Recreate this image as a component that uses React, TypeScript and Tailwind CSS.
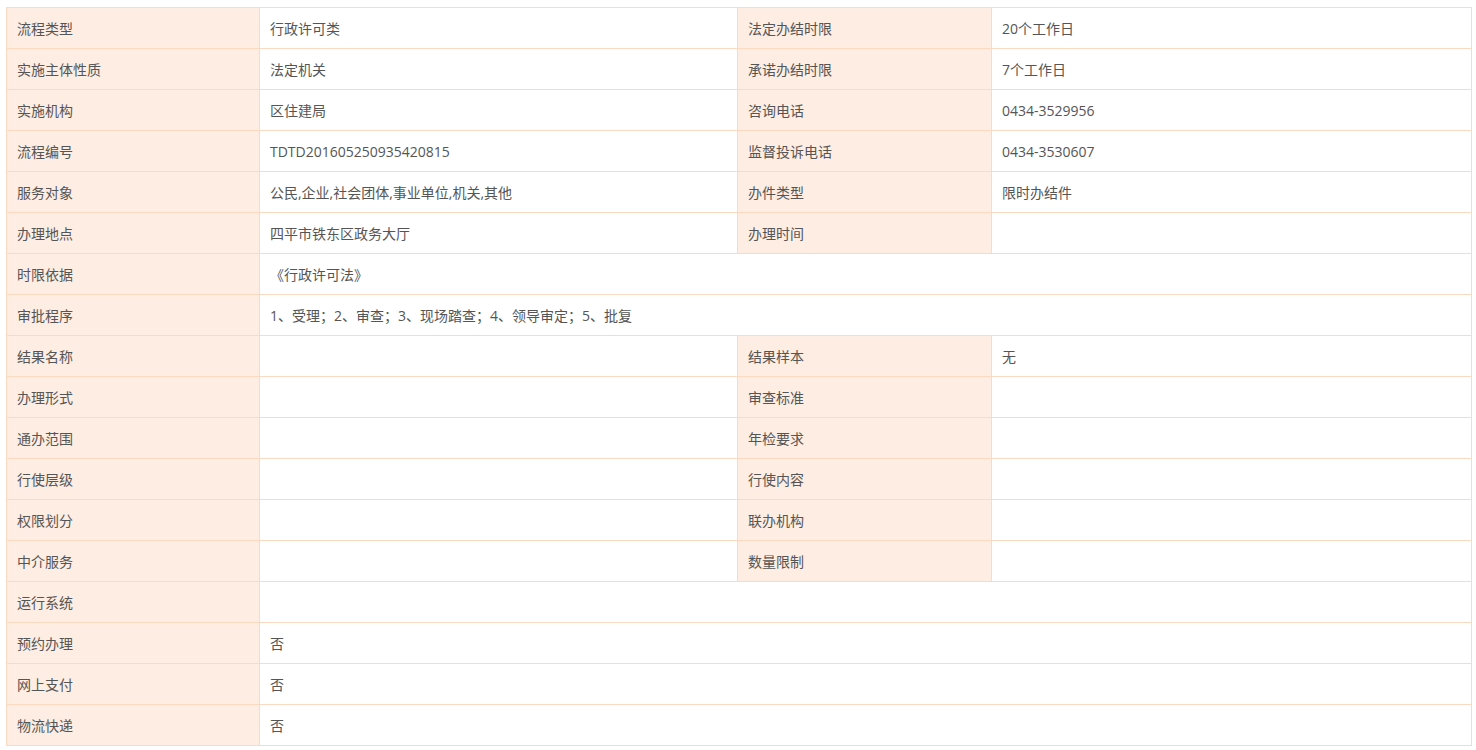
import React from "react";

type Row =
  | { kind: "pair"; l1: string; v1: string; l2: string; v2: string }
  | { kind: "wide"; l1: string; v1: string };

const rows: Row[] = [
  { kind: "pair", l1: "流程类型", v1: "行政许可类", l2: "法定办结时限", v2: "20个工作日" },
  { kind: "pair", l1: "实施主体性质", v1: "法定机关", l2: "承诺办结时限", v2: "7个工作日" },
  { kind: "pair", l1: "实施机构", v1: "区住建局", l2: "咨询电话", v2: "0434-3529956" },
  { kind: "pair", l1: "流程编号", v1: "TDTD201605250935420815", l2: "监督投诉电话", v2: "0434-3530607" },
  { kind: "pair", l1: "服务对象", v1: "公民,企业,社会团体,事业单位,机关,其他", l2: "办件类型", v2: "限时办结件" },
  { kind: "pair", l1: "办理地点", v1: "四平市铁东区政务大厅", l2: "办理时间", v2: "" },
  { kind: "wide", l1: "时限依据", v1: "《行政许可法》" },
  { kind: "wide", l1: "审批程序", v1: "1、受理；2、审查；3、现场踏查；4、领导审定；5、批复" },
  { kind: "pair", l1: "结果名称", v1: "", l2: "结果样本", v2: "无" },
  { kind: "pair", l1: "办理形式", v1: "", l2: "审查标准", v2: "" },
  { kind: "pair", l1: "通办范围", v1: "", l2: "年检要求", v2: "" },
  { kind: "pair", l1: "行使层级", v1: "", l2: "行使内容", v2: "" },
  { kind: "pair", l1: "权限划分", v1: "", l2: "联办机构", v2: "" },
  { kind: "pair", l1: "中介服务", v1: "", l2: "数量限制", v2: "" },
  { kind: "wide", l1: "运行系统", v1: "" },
  { kind: "wide", l1: "预约办理", v1: "否" },
  { kind: "wide", l1: "网上支付", v1: "否" },
  { kind: "wide", l1: "物流快递", v1: "否" },
];

const cell = "h-[41px] border border-[#fcd9c1] px-[10px] align-middle whitespace-nowrap";
const label = `${cell} bg-[#fdede3]`;
const value = `${cell} bg-white`;

export default function App() {
  return (
    <div className="min-h-[750px] bg-white pl-[6px] pt-[7px] text-[14px] text-[#555] [font-family:'Open_Sans','Noto_Sans_CJK_SC',sans-serif]">
      <table className="w-[1466px] table-fixed border-collapse">
        <colgroup>
          <col className="w-[253px]" />
          <col className="w-[478px]" />
          <col className="w-[254px]" />
          <col />
        </colgroup>
        <tbody>
          {rows.map((r) =>
            r.kind === "pair" ? (
              <tr key={r.l1}>
                <td className={label}>{r.l1}</td>
                <td className={value}>{r.v1}</td>
                <td className={label}>{r.l2}</td>
                <td className={value}>{r.v2}</td>
              </tr>
            ) : (
              <tr key={r.l1}>
                <td className={label}>{r.l1}</td>
                <td className={value} colSpan={3}>
                  {r.v1}
                </td>
              </tr>
            )
          )}
        </tbody>
      </table>
    </div>
  );
}
